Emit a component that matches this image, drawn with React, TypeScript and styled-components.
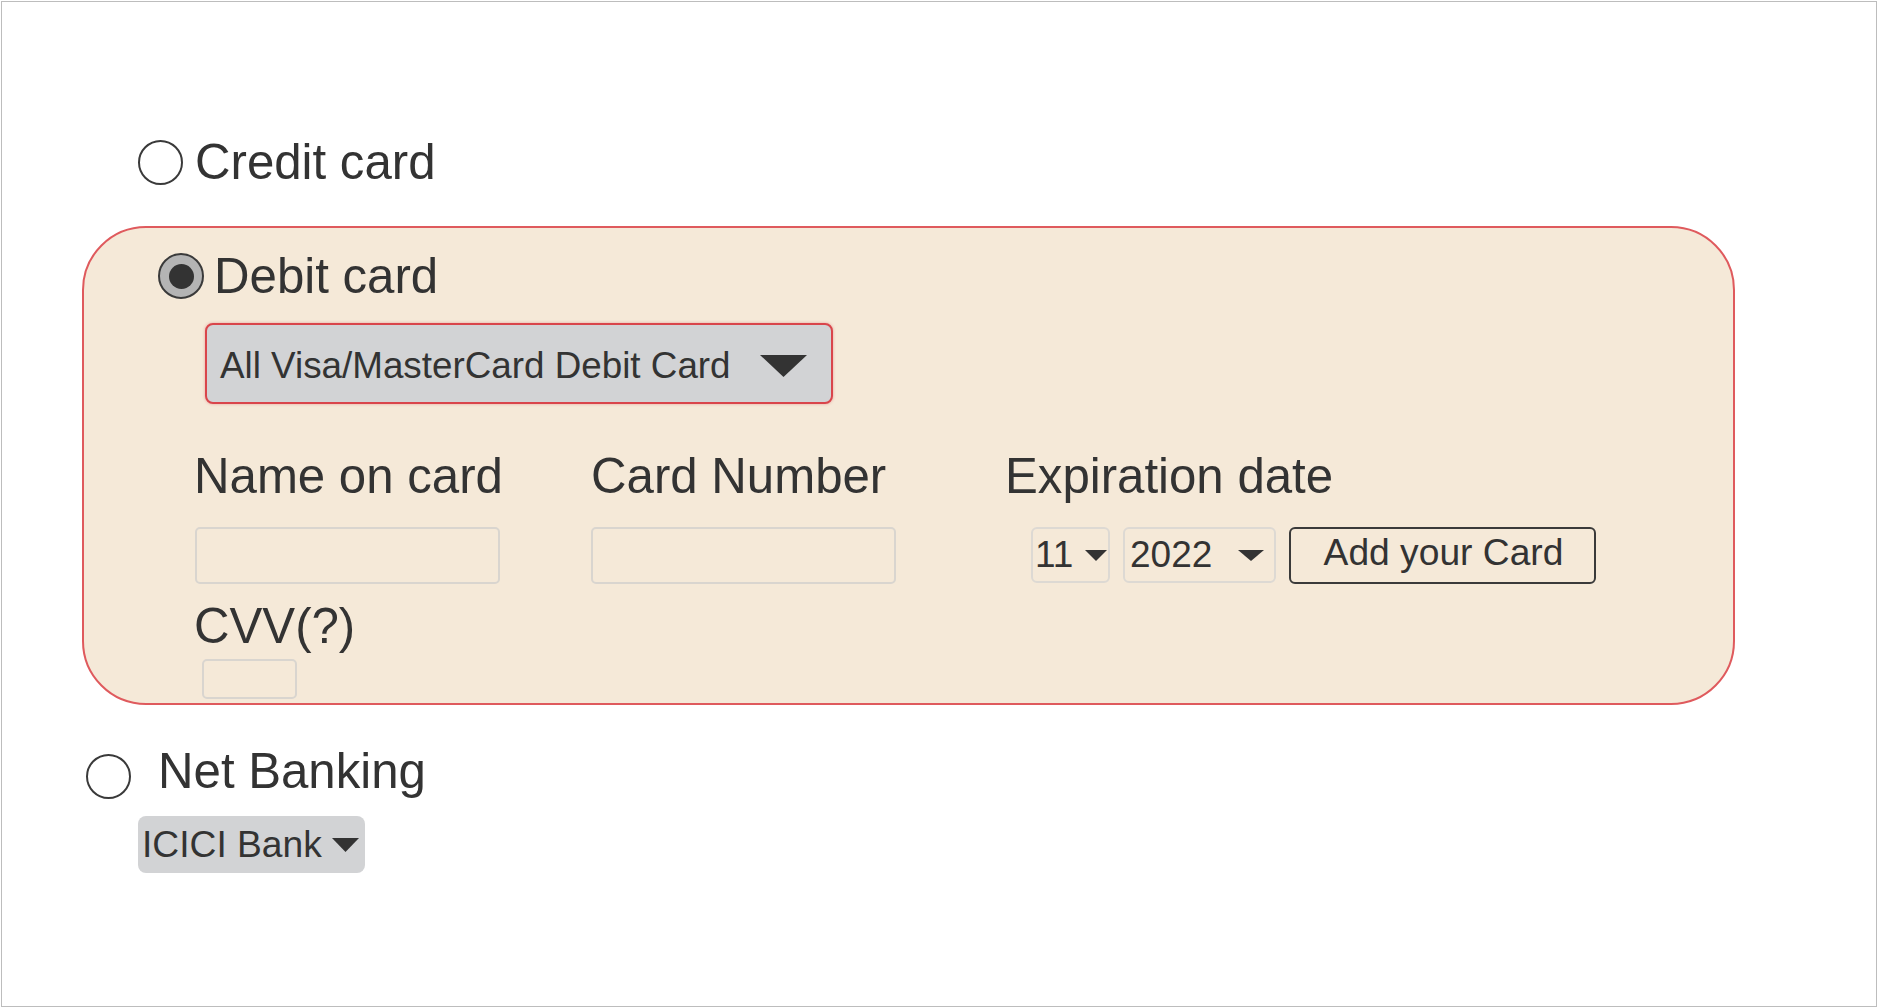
import React from "react";
import styled, { createGlobalStyle } from "styled-components";

const GlobalStyle = createGlobalStyle`
  html, body { margin: 0; padding: 0; background: #ffffff; }
  body { font-family: "Liberation Sans", Arial, Helvetica, sans-serif; color: #333333; }
  * { box-sizing: border-box; }
`;

const Frame = styled.div`
  margin: 1px;
  width: 1876px;
  height: 1006px;
  border: 1px solid #bdbdbd;
  display: flex;
  flex-direction: column;
  align-items: flex-start;
  background: #ffffff;
`;

const OptionRow = styled.label<{ $top: number; $left: number; $gap: number }>`
  display: flex;
  align-items: center;
  height: 56px;
  margin-top: ${(p) => p.$top}px;
  margin-left: ${(p) => p.$left}px;
  gap: ${(p) => p.$gap}px;
  cursor: pointer;
`;

const Radio = styled.span<{ $checked?: boolean }>`
  position: relative;
  display: inline-block;
  flex: none;
  width: ${(p) => (p.$checked ? 46 : 45)}px;
  height: ${(p) => (p.$checked ? 46 : 45)}px;
  border-radius: 50%;
  border: 2px solid #3a3a3a;
  background: ${(p) => (p.$checked ? "#b4b4b4" : "#ffffff")};

  &::after {
    content: "";
    display: ${(p) => (p.$checked ? "block" : "none")};
    position: absolute;
    left: 50%;
    top: 50%;
    width: 25px;
    height: 25px;
    margin: -12.5px 0 0 -12.5px;
    border-radius: 50%;
    background: #333333;
  }
`;

const OptionLabel = styled.span<{ $lift?: number }>`
  font-size: 49.2px;
  line-height: 56px;
  white-space: nowrap;
  color: #333333;
  position: relative;
  top: ${(p) => -(p.$lift ?? 0)}px;
`;

const DebitBox = styled.section`
  margin-top: 36px;
  margin-left: 80px;
  width: 1653px;
  height: 479px;
  border: 2px solid #df5a5d;
  border-radius: 64px;
  background: #f5e9d8;
  display: flex;
  flex-direction: column;
  align-items: flex-start;
`;

const CardTypeSelect = styled.div`
  margin-top: 19px;
  margin-left: 121px;
  width: 628px;
  height: 81px;
  border: 2px solid #d9454b;
  border-radius: 8px;
  box-shadow: 0 0 3px rgba(217, 69, 75, 0.45);
  background: #d2d3d5;
  display: flex;
  align-items: center;
  justify-content: space-between;
  padding: 5px 24px 0 13px;
  font-size: 36.8px;
  color: #333333;
  white-space: nowrap;
`;

const Fields = styled.div`
  margin-top: 44px;
  margin-left: 110px;
  display: flex;
  align-items: flex-start;
`;

const FieldColumn = styled.div<{ $width?: number }>`
  display: flex;
  flex-direction: column;
  align-items: flex-start;
  width: ${(p) => (p.$width ? `${p.$width}px` : "auto")};
`;

const FieldLabel = styled.div<{ $top?: number; $left?: number }>`
  font-size: 49.2px;
  line-height: 56px;
  white-space: nowrap;
  color: #333333;
  margin-top: ${(p) => p.$top ?? 0}px;
  margin-left: ${(p) => p.$left ?? 0}px;
`;

const TextInput = styled.input<{ $w: number; $h: number; $top: number; $left: number }>`
  display: block;
  width: ${(p) => p.$w}px;
  height: ${(p) => p.$h}px;
  margin: ${(p) => p.$top}px 0 0 ${(p) => p.$left}px;
  border: 2px solid #d9d5cf;
  border-radius: 5px;
  background: transparent;
  outline: none;
  font-family: inherit;
  font-size: 30px;
  color: #333333;
`;

const ExpiryControls = styled.div`
  display: flex;
  align-items: flex-start;
  margin-top: 23px;
  margin-left: 29px;
`;

const SmallSelect = styled.div<{ $w: number; $padL: number; $padR: number; $after: number }>`
  width: ${(p) => p.$w}px;
  height: 56px;
  margin-right: ${(p) => p.$after}px;
  border: 2px solid #ddd9d3;
  border-radius: 6px;
  display: flex;
  align-items: center;
  justify-content: space-between;
  padding: 0 ${(p) => p.$padR}px 0 ${(p) => p.$padL}px;
  font-size: 37px;
  color: #333333;
  white-space: nowrap;
`;

const AddButton = styled.button`
  width: 307px;
  height: 57px;
  border: 2px solid #3a3a3a;
  border-radius: 6px;
  background: transparent;
  font-family: "Liberation Sans", Arial, Helvetica, sans-serif;
  font-size: 37.2px;
  color: #333333;
  padding: 0 0 6px 2px;
  cursor: pointer;
  white-space: nowrap;
`;

const BankSelect = styled.div`
  margin-top: 12px;
  margin-left: 136px;
  width: 227px;
  height: 57px;
  border-radius: 8px;
  background: #d2d3d5;
  display: flex;
  align-items: center;
  justify-content: space-between;
  padding: 0 6px 0 4px;
  font-size: 37.2px;
  color: #333333;
  white-space: nowrap;
`;

const CaretSvg = styled.svg`
  display: block;
  flex: none;
`;

function Caret({ w, h }: { w: number; h: number }) {
  return (
    <CaretSvg width={w} height={h} viewBox={`0 0 ${w} ${h}`} aria-hidden="true">
      <polygon points={`0,0 ${w},0 ${w / 2},${h}`} fill="#333333" />
    </CaretSvg>
  );
}

export default function App() {
  return (
    <>
      <GlobalStyle />
      <Frame>
        <OptionRow $top={132} $left={136} $gap={12}>
          <Radio />
          <OptionLabel>Credit card</OptionLabel>
        </OptionRow>

        <DebitBox>
          <OptionRow $top={20} $left={74} $gap={10}>
            <Radio $checked />
            <OptionLabel>Debit card</OptionLabel>
          </OptionRow>

          <CardTypeSelect>
            <span>All Visa/MasterCard Debit Card</span>
            <Caret w={47} h={22} />
          </CardTypeSelect>

          <Fields>
            <FieldColumn $width={397}>
              <FieldLabel>Name on card</FieldLabel>
              <TextInput $w={305} $h={57} $top={23} $left={1} />
              <FieldLabel $top={14}>CVV(?)</FieldLabel>
              <TextInput $w={95} $h={40} $top={5} $left={8} />
            </FieldColumn>

            <FieldColumn $width={411}>
              <FieldLabel>Card Number</FieldLabel>
              <TextInput $w={305} $h={57} $top={23} $left={0} />
            </FieldColumn>

            <FieldColumn>
              <FieldLabel $left={3}>Expiration date</FieldLabel>
              <ExpiryControls>
                <SmallSelect $w={79} $padL={2} $padR={1} $after={13}>
                  <span>11</span>
                  <Caret w={22} h={11} />
                </SmallSelect>
                <SmallSelect $w={153} $padL={5} $padR={10} $after={13}>
                  <span>2022</span>
                  <Caret w={26} h={11} />
                </SmallSelect>
                <AddButton type="button">Add your Card</AddButton>
              </ExpiryControls>
            </FieldColumn>
          </Fields>
        </DebitBox>

        <OptionRow $top={43} $left={84} $gap={27}>
          <Radio />
          <OptionLabel $lift={5}>Net Banking</OptionLabel>
        </OptionRow>

        <BankSelect>
          <span>ICICI Bank</span>
          <Caret w={27} h={14} />
        </BankSelect>
      </Frame>
    </>
  );
}
